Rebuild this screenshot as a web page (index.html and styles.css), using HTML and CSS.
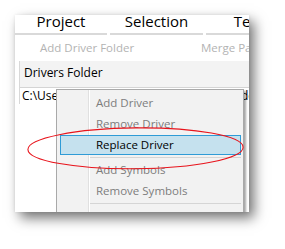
FILE: index.html
```html
<!DOCTYPE html>
<html>
<head>
<meta charset="utf-8">
<link rel="stylesheet" href="styles.css">
</head>
<body>
<div class="window">
  <div class="tabs">
    <div class="tab">Project</div>
    <div class="tab">Selection</div>
    <div class="tab">Tests</div>
  </div>
  <div class="toolbar">
    <div class="tool">Add Driver Folder</div>
    <div class="tool">Merge Paths</div>
  </div>
  <div class="panel">
    <div class="panel-head">Drivers Folder</div>
    <div class="panel-row">C:\Users\Public\Documents\Drivers\Folder\Proj'</div>
  </div>
  <div class="menu">
    <div class="item disabled">Add Driver</div>
    <div class="item disabled">Remove Driver</div>
    <div class="item active">Replace Driver</div>
    <div class="sep"></div>
    <div class="item disabled">Add Symbols</div>
    <div class="item disabled">Remove Symbols</div>
    <div class="sep"></div>
    <div class="item disabled">Export Symbols</div>
  </div>
</div>
<svg class="mark" width="285" height="249" viewBox="0 0 285 249">
  <ellipse cx="135.5" cy="148.3" rx="107.6" ry="20.4" fill="none" stroke="#e8141c" stroke-width="1.1" transform="rotate(-0.6 135.5 148.3)"/>
</svg>
</body>
</html>
```

FILE: styles.css
```css
html, body {
  margin: 0;
  padding: 0;
}
body {
  width: 285px;
  height: 249px;
  background: #ffffff;
  overflow: hidden;
  position: relative;
  font-family: "Open Sans", "Noto Sans", sans-serif;
  color: #000;
}
.window {
  position: relative;
  margin: 15px 0 0 15px;
  width: 234px;
  height: 197px;
  background: #ffffff;
  overflow: hidden;
  box-shadow: 5px 6px 12px rgba(0,0,0,0.55), 0 0 3px rgba(0,0,0,0.08);
}
.tabs {
  display: grid;
  grid-template-columns: 92px 93px 92px;
  column-gap: 3px;
}
.tab {
  font-size: 15px;
  line-height: 12px;
  padding-bottom: 6px;
  border-bottom: 2px solid #d9d9d9;
  text-align: center;
  white-space: nowrap;
}
.toolbar {
  display: flex;
  height: 26px;
  padding-left: 25px;
  font-size: 11.5px;
  line-height: 26px;
  color: #b3b3b3;
}
.tool {
  width: 161px;
  flex: none;
  white-space: nowrap;
}
.panel {
  margin-left: 4px;
  border-left: 1px solid #d8d8d8;
  font-size: 12px;
}
.panel-head {
  height: 27px;
  box-sizing: border-box;
  padding: 4px 0 7px 4px;
  line-height: 16px;
  background: #f3f3f3;
  border-bottom: 1px solid #d4d4d4;
}
.panel-row {
  padding-left: 2px;
  line-height: 16px;
  white-space: nowrap;
}
.menu {
  position: absolute;
  left: 41px;
  top: 74px;
  width: 188px;
  box-sizing: border-box;
  padding: 2px 2px 2px 3px;
  border: 1px solid #a9a9a9;
  background: linear-gradient(to right, transparent 31px, #e0e0e0 31px, #e0e0e0 32px, #ffffff 32px, #ffffff 33px, transparent 33px), #f2f2f2;
  box-shadow: 2px 2px 2px rgba(0,0,0,0.35);
  font-size: 11.5px;
}
.item {
  height: 20px;
  box-sizing: border-box;
  margin: 1px 0;
  padding-left: 35px;
  border: 1px solid transparent;
  line-height: 18px;
  white-space: nowrap;
}
.item.disabled {
  color: #7d7d7d;
}
.item.active {
  background: #c5e1ee;
  border-color: #2f9bd6;
  color: #000;
}
.sep {
  height: 1px;
  margin: 2px 0 2px 30px;
  background: #d5d5d5;
}
.mark {
  position: absolute;
  left: 0;
  top: 0;
  pointer-events: none;
}
```
